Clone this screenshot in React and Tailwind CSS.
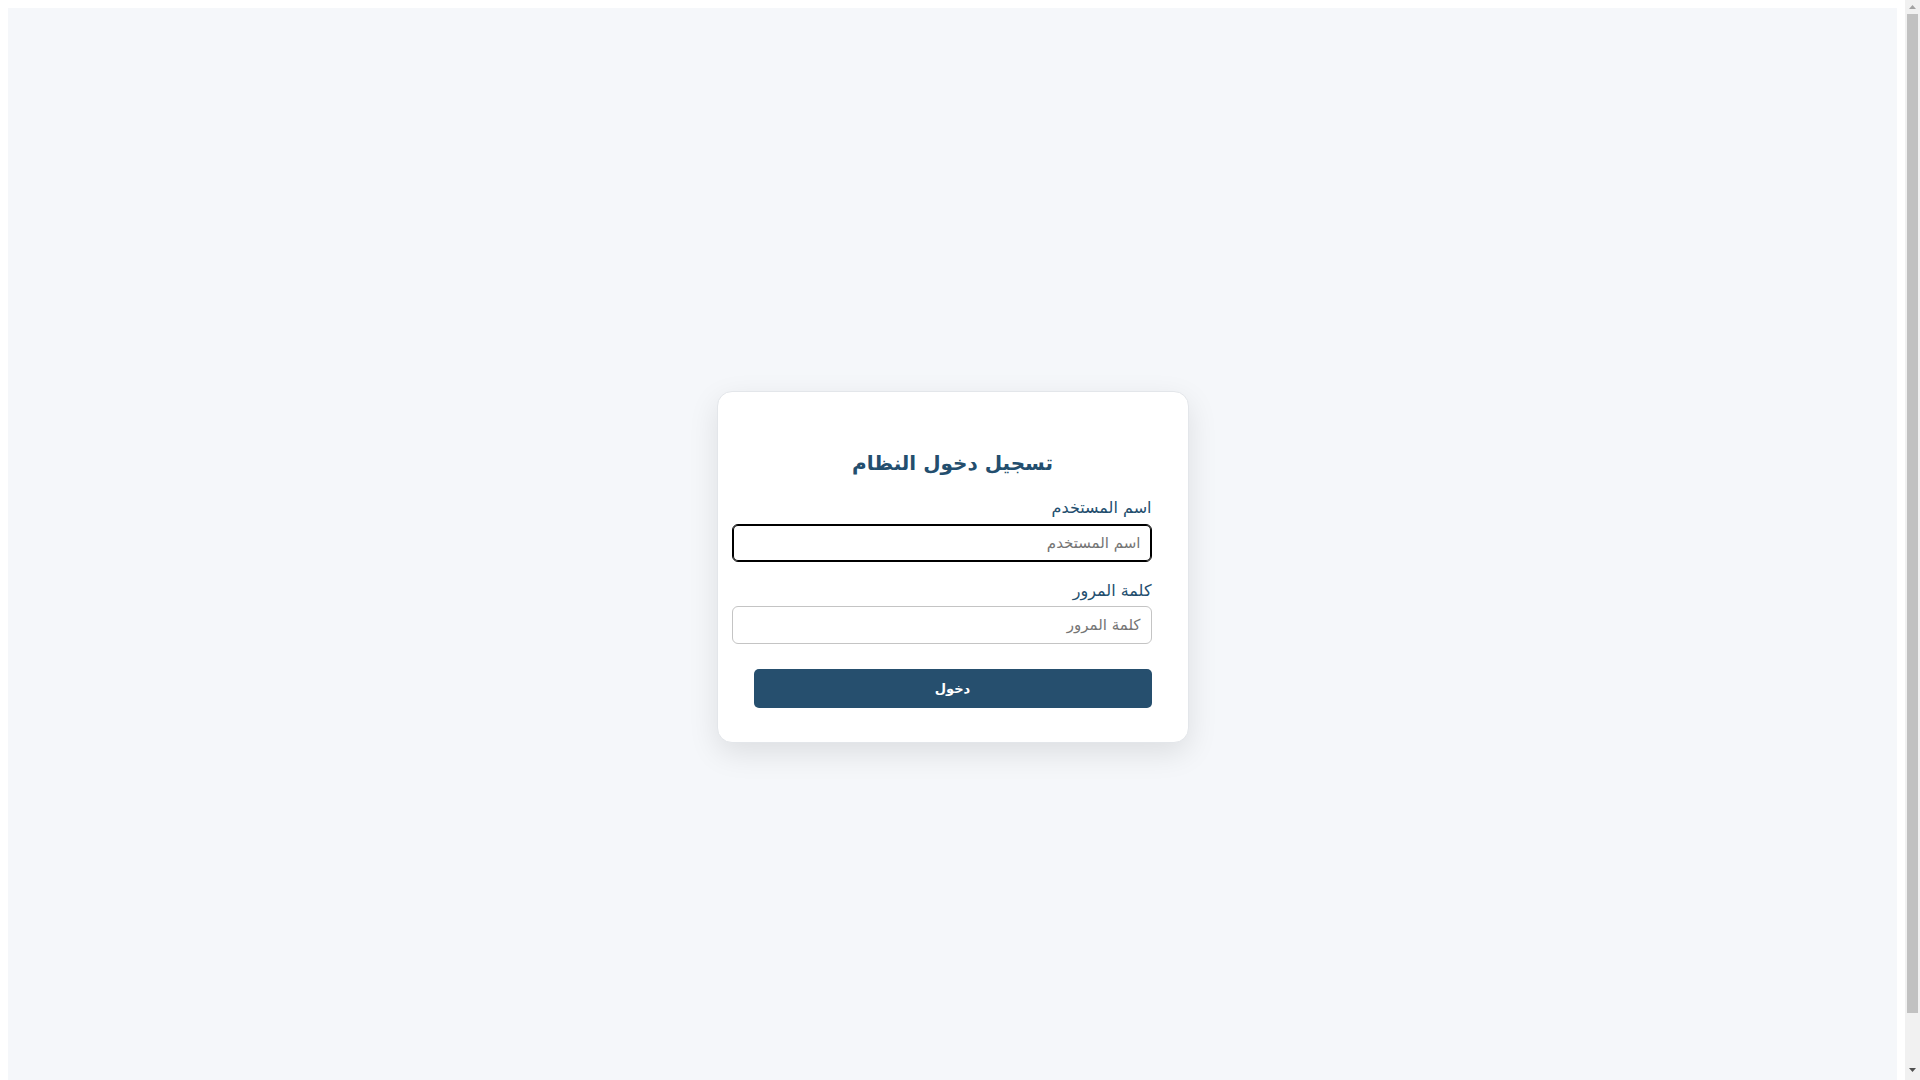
export default function App() {
  return (
    <div className="flex h-screen overflow-hidden bg-white" style={{ fontFamily: '"DejaVu Sans", sans-serif' }}>
      <div className="flex-1 p-2 pb-0">
        <div dir="rtl" className="min-h-screen bg-[#f5f7fa] flex items-center justify-center pt-[38px]">
          <div className="w-[472px] bg-white rounded-[15px] border border-[#e3e6ea] shadow-[0_10px_30px_rgba(0,0,0,0.1)] px-[36px] pt-[36px] pb-[34px]">
            <h2 className="text-center text-[20px] leading-[30px] font-bold text-[#234e6e] mt-[20px] mb-[18px]">تسجيل دخول النظام</h2>
            <label className="block text-[16px] leading-[24px] text-[#234e6e] mb-[4px]">اسم المستخدم</label>
            <input
              type="text"
              placeholder="اسم المستخدم"
              className="box-content block w-full px-[10px] py-[10px] h-[16px] text-[15px] border border-black shadow-[inset_0_0_0_1px_#000] rounded-[6px] outline-none placeholder:text-[#757575] mb-[17px]"
            />
            <label className="block text-[16px] leading-[24px] text-[#234e6e] mb-[3px]">كلمة المرور</label>
            <input
              type="password"
              placeholder="كلمة المرور"
              className="box-content block w-full px-[10px] py-[10px] h-[16px] text-[15px] border border-[#c4c4c4] rounded-[6px] outline-none placeholder:text-[#757575] mb-[25px]"
            />
            <button className="block w-full h-[39px] bg-[#264f6e] text-white font-bold text-[13px] rounded-[5px]">دخول</button>
          </div>
        </div>
      </div>
      <div className="w-[15px] shrink-0 bg-[#f1f1f1] flex flex-col items-center">
        <div className="h-[14px] flex items-center justify-center">
          <svg width="7" height="4" viewBox="0 0 7 4"><path d="M3.5 0L7 4H0z" fill="#a3a3a3" /></svg>
        </div>
        <div className="w-[11px] h-[999px] bg-[#c1c1c1]" />
        <div className="flex-1" />
        <div className="h-[14px] mb-[3px] flex items-center justify-center">
          <svg width="7" height="4" viewBox="0 0 7 4"><path d="M0 0H7L3.5 4z" fill="#505050" /></svg>
        </div>
      </div>
    </div>
  );
}
